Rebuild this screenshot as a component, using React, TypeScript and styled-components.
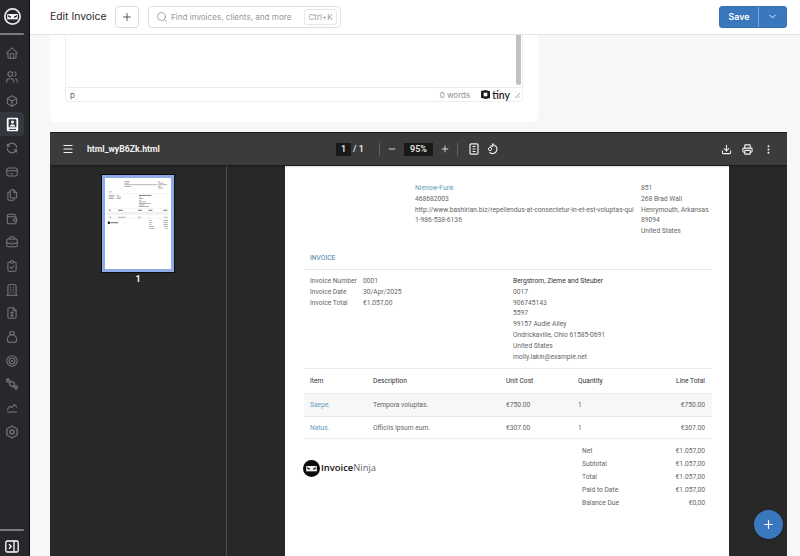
import React from 'react';
import styled, { createGlobalStyle } from 'styled-components';
import { ChevronDown, Download, Minus, MoreVertical, Plus, Printer, Search, Menu } from 'lucide-react';
import {
  TbBox, TbBriefcase, TbBuilding, TbChartLine, TbClipboardCheck, TbCreditCard, TbFileDollar, TbFiles,
  TbHome, TbMoneybag, TbRefresh, TbTarget, TbUsers, TbWallet,
} from 'react-icons/tb';

const Global = createGlobalStyle`
  html, body { margin: 0; padding: 0; height: 100%; overflow: hidden; background: #f7f7f8; }
  #root { height: 100%; }
  * { box-sizing: border-box; }
`;

const Shell = styled.div`
  display: flex; width: 800px; height: 556px; overflow: hidden;
  font-family: Inter, "Liberation Sans", sans-serif;
`;
const Sidebar = styled.aside`
  width: 30px; flex: none; background: #27282b; border-right: 1px solid #101012;
  display: flex; flex-direction: column; padding-right: 5px;
`;
const LogoSlot = styled.div`height: 33px; display: flex; align-items: center; justify-content: center;`;
const Rule = styled.div`height: 2px; background: #7b7c7e; border-radius: 0 1px 1px 0; flex: none;`;
const NavList = styled.nav`display: flex; flex-direction: column; padding-top: 6.5px; flex: 1;`;
const NavItem = styled.div<{ $active?: boolean }>`
  height: 23.65px; flex: none; display: flex; align-items: center; justify-content: center; color: #77787b;
  border-radius: 0 4px 4px 0; background: ${p => (p.$active ? '#34373e' : 'transparent')};
`;
const Collapse = styled.div`height: 25px; display: flex; align-items: center; justify-content: center; color: #fff; padding-top: 5px;`;
const Main = styled.div`flex: 1; min-width: 0; display: flex; flex-direction: column; background: #f7f7f8; position: relative;`;
const TopBar = styled.header`
  height: 35px; flex: none; background: #fff; border-bottom: 1px solid #e4e4e6;
  display: flex; align-items: center; padding: 0 13px 1px 20px;
`;
const Title = styled.h1`margin: 0; font-size: 10.4px; font-weight: 400; color: #2c2c2e; width: 65px; flex: none;`;
const SquareBtn = styled.div`
  width: 24px; height: 22px; border: 1px solid #dcdcde; border-radius: 4px; display: flex;
  align-items: center; justify-content: center; color: #333; flex: none;
`;
const SearchBox = styled.div`
  margin-left: 9px; width: 193px; height: 22px; border: 1px solid #e0e0e2; border-radius: 4px;
  display: flex; align-items: center; padding: 0 3px 0 7px; color: #8a8a8c; font-size: 8.1px; gap: 3px;
`;
const SearchText = styled.span`flex: 1; white-space: nowrap; color: #97979a;`;
const Kbd = styled.span`
  width: 33px; height: 16px; border: 1px solid #e6e6e8; border-radius: 3px; font-size: 7.9px; flex: none;
  display: flex; align-items: center; justify-content: center; color: #9a9a9c;
`;
const SaveGroup = styled.div`
  margin-left: auto; display: flex; height: 22px; border-radius: 3px; overflow: hidden; color: #fff; background: #3a78bd;
  border: 1px solid #3570b0;
`;
const SaveLabel = styled.div`width: 38px; display: flex; align-items: center; justify-content: center; font-size: 8.8px; font-weight: 600;`;
const SaveArrow = styled.div`width: 28px; border-left: 1px solid #78a6d6; display: flex; align-items: center; justify-content: center;`;
const Content = styled.div`flex: 1; min-height: 0; display: flex; flex-direction: column; gap: 10px; padding: 0 13px 0 20px; overflow: hidden;`;
const Card = styled.section`
  width: 488px; height: 87px; flex: none; background: #fff; border-radius: 0 0 4px 4px; padding: 0 15px 20px;
  display: flex;
`;
const Editor = styled.div`
  flex: 1; display: flex; flex-direction: column; border: 1px solid #efeff0; border-top: 0; border-radius: 0 0 4px 4px;
`;
const EditorBody = styled.div`flex: 1; display: flex; justify-content: flex-end; padding: 0 1px 2px 0;`;
const Scrollbar = styled.div`width: 5px; height: 100%; background: #c1c1c1; border-radius: 0 0 2px 2px;`;
const Status = styled.div`
  height: 14px; flex: none; border-top: 1px solid #ececed; display: flex; align-items: center;
  padding: 0 2px 0 4px; font-size: 8px; color: #8d8d8f;
`;
const PathTag = styled.span`flex: 1; color: #666;`;
const TinyMark = styled.span`display: flex; align-items: center; gap: 2px; margin-left: 11px; color: #1b1d22; font-weight: 600; font-size: 10.5px; font-family: Lato, sans-serif;`;
const Grip = styled.svg`margin-left: 4px;`;

const Viewer = styled.section`
  width: 737px; flex: 1; min-height: 0; background: #282828; border-top: 1px solid #17181a; display: flex; flex-direction: column;
  overflow: hidden; font-family: Roboto, sans-serif;
`;
const PdfBar = styled.div`
  height: 32px; flex: none; background: #3b3b3b; box-shadow: 0 1px 2px #0006; color: #f1f1f1; position: relative; z-index: 1;
  display: grid; grid-template-columns: 286px 1fr 66px; align-items: center;
`;
const PdfLeft = styled.div`display: flex; align-items: center; padding-left: 12px; gap: 13px;`;
const FileName = styled.span`font-size: 8.7px; font-weight: 700;`;
const PdfCenter = styled.div`display: flex; align-items: center; font-size: 9px; font-weight: 500;`;
const PageField = styled.span<{ $w: number }>`
  width: ${p => p.$w}px; height: 13px; background: #191919; display: flex; align-items: center; justify-content: center;
  font-weight: 500; flex: none;
`;
const PageSep = styled.span`margin-left: 2px; width: 26px; flex: none;`;
const VLine = styled.span`width: 1px; height: 13px; background: #5f5f5f; flex: none;`;
const IconCell = styled.span<{ $w: number }>`width: ${p => p.$w}px; display: flex; align-items: center; justify-content: center; flex: none;`;
const PdfRight = styled.div`display: flex; align-items: center; gap: 10px;`;
const PdfBody = styled.div`flex: 1; min-height: 0; display: flex;`;
const Thumbs = styled.div`
  width: 177px; flex: none; border-right: 1px solid #4c4c4c; display: flex; flex-direction: column; align-items: center; padding-top: 10px;
  color: #f0f0f0;
`;
const ThumbFrame = styled.div`width: 72px; height: 97px; background: #fff; border: 3px solid #8fabe8; outline: 1px solid #0e0e10;`;
const ThumbNo = styled.div`font-size: 9px; font-weight: 700; margin-top: 1px; line-height: 12px;`;
const Stage = styled.div`flex: 1; min-width: 0; padding: 1px 0 0 58px;`;
const Page = styled.article`
  width: 444px; height: 420px; background: #fff; padding: 17px 17px 0 19px; font-size: 6.7px; line-height: 10.8px; color: #666;
`;
const Head = styled.div`display: grid; grid-template-columns: 226px 1fr; margin-left: 111px; height: 70px;`;
const Col = styled.div`display: flex; flex-direction: column; white-space: nowrap;`;
const Link = styled.span`color: #6a9dbb;`;
const DocTitle = styled.div`color: #3f7fa6; padding: 0 6px 6px; height: 17px; border-bottom: 1px solid #e8e8e8; line-height: 10.8px;`;
const InfoRow = styled.div`display: grid; grid-template-columns: 203px 1fr; padding: 6px 6px 6px; height: 99px; border-bottom: 1px solid #ececec;`;
const Meta = styled.div`display: grid; grid-template-columns: 53px 1fr; align-content: start;`;
const ClientName = styled.span`color: #333;`;
const TableHead = styled.div`
  display: grid; grid-template-columns: 63px 133px 72px 40px 1fr; align-items: center; padding: 0 7px 0 6px;
  height: 25px; color: #333; border-bottom: 1px solid #ececec;
`;
const Row = styled.div<{ $shade?: boolean }>`
  display: grid; grid-template-columns: 63px 133px 72px 40px 1fr; align-items: center; padding: 1px 7px 0 6px;
  height: ${p => (p.$shade ? 23 : 22)}px;
  background: ${p => (p.$shade ? '#f7f7f7' : '#fff')};
  border-bottom: ${p => (p.$shade ? '1.5px solid #e8e8e8' : '1px solid #ececec')};
`;
const EndCell = styled.span`text-align: right;`;
const Foot = styled.div`display: flex; justify-content: space-between; align-items: flex-start;`;
const Brand = styled.div`display: flex; align-items: center; gap: 1px; margin: 20px 0 0 -1px;`;
const BrandText = styled.span`font-family: "Open Sans", sans-serif; font-size: 9.4px; line-height: 18px; color: #111; font-weight: 600;`;
const BrandSoft = styled.span`font-weight: 400; color: #666;`;
const Totals = styled.div`width: 130px; padding: 6px 7px 0 0; display: grid; grid-template-columns: 1fr auto; line-height: 13px;`;
const Fab = styled.div`
  position: absolute; left: 724px; top: 510px; width: 29px; height: 29px; border-radius: 50%; background: #3a78bd;
  display: flex; align-items: center; justify-content: center; color: #fff; box-shadow: 0 1px 3px #0004;
`;

const NinjaLogo = ({ size, ring }: { size: number; ring?: boolean }) => (
  <svg width={size} height={size} viewBox="0 0 24 24">
    <circle cx="12" cy="12" r="12" fill={ring ? '#e8e8e8' : '#0b0b0b'} />
    {ring && <circle cx="12" cy="12" r="9.6" fill="#26272a" />}
    <path d="M4.5 8.500h15v7.500h-15z" fill="#f2f2f2" />
    <path d="M5.500 10l4.500 2.200-.4 1.400-3.300-1zM18.500 10L14 12.200l.4 1.400 3.300-1z" fill="#111" />
  </svg>
);

const ActiveIcon = () => (
  <svg width="13" height="15" viewBox="0 0 13 15" fill="none">
    <rect x=".8" y=".8" width="11.4" height="13.4" rx="1.2" fill="#fff" />
    <rect x="2.6" y="2.3" width="7.8" height="8" rx=".6" fill="#34373e" />
    <circle cx="6.500" cy="5" r="1.500" fill="#fff" />
    <path d="M3.800 9.400c.4-1.500 1.400-2 2.700-2s2.300.5 2.700 2z" fill="#fff" />
    <path d="M3 12.400h7" stroke="#34373e" strokeWidth="1" />
  </svg>
);

const ChainIcon = () => (
  <svg width="14" height="14" viewBox="0 0 14 14" fill="none" stroke="currentColor" strokeWidth="1.300">
    <circle cx="3" cy="3.500" r="1.500" />
    <rect x="4.600" y="5" width="4.800" height="4" rx="1.400" transform="rotate(40 7 7)" />
    <circle cx="11" cy="10.500" r="1.500" />
  </svg>
);

const GearIcon = () => (
  <svg width="14" height="14" viewBox="0 0 14 14" fill="none" stroke="currentColor" strokeWidth="1.300">
    <path d="M7 1l5.200 3v6L7 13l-5.200-3V4z" strokeLinejoin="round" />
    <circle cx="7" cy="7" r="2" />
  </svg>
);

const thumbLines: [number, number, number, string?][] = [
  [130, 21, 36, '#7fa8c0'], [130, 32, 32], [130, 43, 220], [130, 54, 44],
  [356, 21, 12], [356, 32, 38], [356, 43, 62], [356, 54, 18], [356, 65, 36],
  [25, 91, 24, '#7fa8c0'],
  [25, 114, 40], [78, 114, 14], [25, 125, 34], [78, 125, 30], [25, 136, 36], [78, 136, 28],
  [228, 114, 84, '#555'], [228, 125, 14], [228, 136, 30], [228, 147, 14], [228, 158, 48], [228, 168, 80], [228, 179, 38], [228, 190, 68],
  [25, 214, 14, '#444'], [88, 214, 32, '#444'], [221, 214, 28, '#444'], [293, 214, 26, '#444'], [392, 214, 28, '#444'],
  [25, 239, 18, '#7fa8c0'], [88, 239, 50], [221, 239, 24], [293, 239, 4], [396, 239, 24],
  [25, 261, 18, '#7fa8c0'], [88, 261, 52], [221, 261, 24], [293, 261, 4], [396, 261, 24],
  [297, 284, 14], [392, 284, 30], [297, 298, 22], [392, 298, 30], [297, 311, 14], [392, 311, 30], [297, 323, 32], [392, 323, 30], [297, 336, 34], [405, 336, 17],
];

const Thumb = () => (
  <svg width="66" height="91" viewBox="0 0 444 612" style={{ display: 'block' }}>
    {thumbLines.map(([x, y, w, c], i) => <rect key={i} x={x} y={y} width={w} height="5" fill={c ?? '#999'} />)}
    <rect x="18" y="102" width="408" height="2" fill="#ddd" />
    <rect x="18" y="202" width="408" height="2" fill="#ddd" />
    <rect x="18" y="227" width="408" height="22" fill="#f2f2f2" />
    <rect x="18" y="272" width="408" height="2" fill="#ddd" />
    <circle cx="26" cy="301" r="8" fill="#111" />
    <rect x="36" y="298" width="52" height="6" fill="#555" />
  </svg>
);

const navIcons = [TbHome, TbUsers, TbBox, ActiveIcon, TbRefresh, TbCreditCard, TbFiles, TbWallet, TbBriefcase, TbClipboardCheck,
  TbBuilding, TbFileDollar, TbMoneybag, TbTarget, ChainIcon, TbChartLine, GearIcon];

const client = ['0017', '906745143', '5597', '99157 Audie Alley', 'Ondrickaville, Ohio 61585-0691', 'United States', 'molly.lakin@example.net'];
const totals = [['Net', '€1.057,00'], ['Subtotal', '€1.057,00'], ['Total', '€1.057,00'], ['Paid to Date', '€1.057,00'], ['Balance Due', '€0,00']];

export default function App() {
  return (
    <Shell>
      <Global />
      <Sidebar>
        <LogoSlot><NinjaLogo size={17} ring /></LogoSlot>
        <Rule />
        <NavList>
          {navIcons.map((Icon, i) => {
            const Comp = Icon as React.ComponentType<{ size?: number; strokeWidth?: number }>;
            return (
              <NavItem key={i} $active={Icon === ActiveIcon}>
                <Comp size={14} strokeWidth={1.8} />
              </NavItem>
            );
          })}
        </NavList>
        <Rule />
        <Collapse>
          <svg width="14" height="13" viewBox="0 0 14 13" fill="none" stroke="#fff" strokeWidth="1.3">
            <rect x=".8" y="1" width="12.4" height="11" rx="1.5" />
            <path d="M9 1v11" />
            <path d="M4 4.300l2.200 2.200L4 8.700" />
          </svg>
        </Collapse>
      </Sidebar>
      <Main>
        <TopBar>
          <Title>Edit Invoice</Title>
          <SquareBtn><Plus size={12} strokeWidth={1.6} /></SquareBtn>
          <SearchBox>
            <Search size={12} strokeWidth={1.5} />
            <SearchText>Find invoices, clients, and more</SearchText>
            <Kbd>Ctrl+K</Kbd>
          </SearchBox>
          <SaveGroup>
            <SaveLabel>Save</SaveLabel>
            <SaveArrow><ChevronDown size={11} strokeWidth={2} /></SaveArrow>
          </SaveGroup>
        </TopBar>
        <Content>
          <Card>
            <Editor>
              <EditorBody><Scrollbar /></EditorBody>
              <Status>
                <PathTag>p</PathTag>
                <span>0 words</span>
                <TinyMark>
                  <svg width="9" height="9" viewBox="0 0 10 10">
                    <path d="M5 0l5 1.500V9l-5 1-5-1.500V1z" fill="#1b1d22" />
                    <rect x="3" y="3" width="4" height="4" fill="#fff" />
                  </svg>
                  tiny
                </TinyMark>
                <Grip width="6" height="6" viewBox="0 0 6 6" stroke="#888" strokeWidth=".7"><path d="M1 6l5-5M3.500 6L6 3.500" /></Grip>
              </Status>
            </Editor>
          </Card>
          <Viewer>
            <PdfBar>
              <PdfLeft>
                <Menu size={12} strokeWidth={2.4} />
                <FileName>html_wyB6Zk.html</FileName>
              </PdfLeft>
              <PdfCenter>
                <PageField $w={15}>1</PageField>
                <PageSep>/&nbsp;1</PageSep>
                <VLine />
                <IconCell $w={24}><Minus size={10} strokeWidth={2} /></IconCell>
                <PageField $w={29}>95%</PageField>
                <IconCell $w={24}><Plus size={10} strokeWidth={2} /></IconCell>
                <VLine />
                <IconCell $w={31}>
                  <svg width="10" height="12" viewBox="0 0 10 12" fill="none" stroke="currentColor" strokeWidth="1.200">
                    <rect x="1" y=".8" width="8" height="10.400" rx="1.200" />
                    <path d="M3.500 3.500h3M3.500 6h3M3.500 8.500h3" strokeWidth="1" />
                  </svg>
                </IconCell>
                <IconCell $w={8}>
                  <svg width="12" height="12" viewBox="0 0 12 12" fill="none" stroke="currentColor" strokeWidth="1.200" style={{ flex: 'none' }}>
                    <path d="M5 1.800a4.400 4.400 0 1 1-2.600 7.400" />
                    <path d="M5.800 .3v2.800H3.200" />
                    <path d="M1 6l2-2 2 2-2 2z" strokeWidth="1" />
                  </svg>
                </IconCell>
              </PdfCenter>
              <PdfRight>
                <Download size={11} strokeWidth={2.2} />
                <Printer size={11} strokeWidth={2.4} />
                <MoreVertical size={11} strokeWidth={2.4} />
              </PdfRight>
            </PdfBar>
            <PdfBody>
              <Thumbs>
                <ThumbFrame><Thumb /></ThumbFrame>
                <ThumbNo>1</ThumbNo>
              </Thumbs>
              <Stage>
                <Page>
                  <Head>
                    <Col>
                      <Link>Nienow-Funk</Link>
                      <span>468682003</span>
                      <span>http://www.bashirian.biz/repellendus-at-consectetur-in-et-est-voluptas-qui</span>
                      <span>1-986-538-6136</span>
                    </Col>
                    <Col>
                      <span>851</span>
                      <span>268 Brad Wall</span>
                      <span>Henrymouth, Arkansas</span>
                      <span>89094</span>
                      <span>United States</span>
                    </Col>
                  </Head>
                  <DocTitle>INVOICE</DocTitle>
                  <InfoRow>
                    <Meta>
                      <span>Invoice Number</span><span>0001</span>
                      <span>Invoice Date</span><span>30/Apr/2025</span>
                      <span>Invoice Total</span><span>€1.057,00</span>
                    </Meta>
                    <Col>
                      <ClientName>Bergstrom, Zieme and Steuber</ClientName>
                      {client.map(l => <span key={l}>{l}</span>)}
                    </Col>
                  </InfoRow>
                  <TableHead>
                    <span>Item</span><span>Description</span><span>Unit Cost</span><span>Quantity</span><EndCell>Line Total</EndCell>
                  </TableHead>
                  <Row $shade>
                    <Link>Saepe.</Link><span>Tempora voluptas.</span><span>€750.00</span><span>1</span><EndCell>€750.00</EndCell>
                  </Row>
                  <Row>
                    <Link>Natus.</Link><span>Officiis ipsum eum.</span><span>€307.00</span><span>1</span><EndCell>€307.00</EndCell>
                  </Row>
                  <Foot>
                    <Brand>
                      <NinjaLogo size={17} />
                      <BrandText>Invoice<BrandSoft>Ninja</BrandSoft></BrandText>
                    </Brand>
                    <Totals>
                      {totals.map(([k, v]) => (
                        <React.Fragment key={k}><span>{k}</span><EndCell>{v}</EndCell></React.Fragment>
                      ))}
                    </Totals>
                  </Foot>
                </Page>
              </Stage>
            </PdfBody>
          </Viewer>
        </Content>
        <Fab><Plus size={13} strokeWidth={2.2} /></Fab>
      </Main>
    </Shell>
  );
}
